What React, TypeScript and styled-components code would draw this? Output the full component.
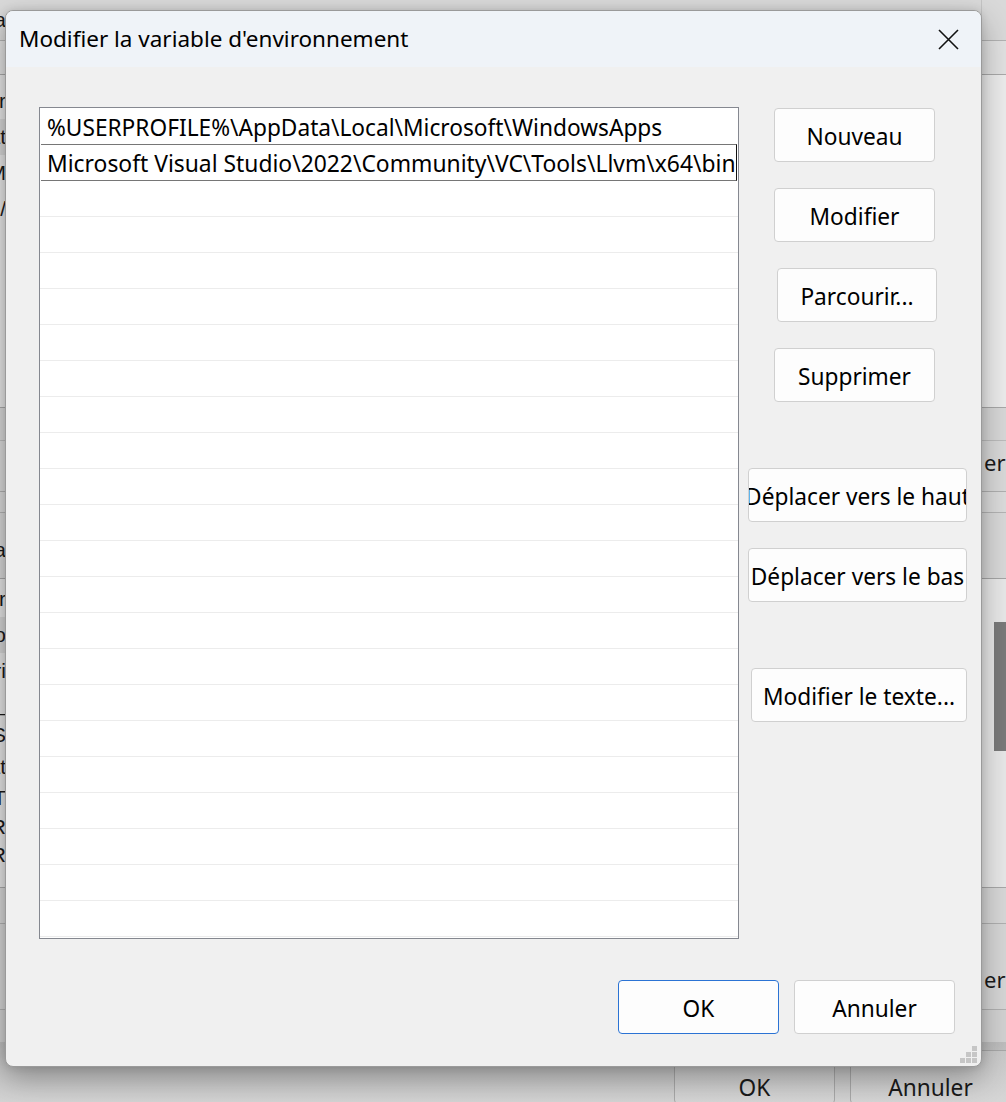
import React from "react";
import styled, { createGlobalStyle } from "styled-components";

const GlobalStyle = createGlobalStyle`
  html, body { margin: 0; padding: 0; }
  body {
    width: 1006px;
    height: 1102px;
    overflow: hidden;
    background: #d6d6d6;
    font-family: "Noto Sans", "Open Sans", sans-serif;
    color: #000;
  }
`;

const Desktop = styled.div`
  position: relative;
  width: 1006px;
  height: 1102px;
  overflow: hidden;
`;

/* ---------- background (parent) window, dimmed ---------- */
const BackWindow = styled.div`
  display: flex;
  flex-direction: column;
  width: 1006px;
  height: 1102px;
  background: #dcdcdc;
`;

const BackSection = styled.div<{ $h: number; $bg: string; $line?: string }>`
  display: flex;
  justify-content: space-between;
  height: ${(p) => p.$h}px;
  flex: none;
  background: ${(p) => p.$bg};
  border-bottom: ${(p) => (p.$line ? `1px solid ${p.$line}` : "none")};
  box-sizing: border-box;
  overflow: hidden;
`;

const LeftPeek = styled.div`
  width: 6px;
  display: flex;
  flex-direction: column;
  overflow: hidden;
`;

const PeekRow = styled.div<{ $h: number; $bg?: string }>`
  height: ${(p) => p.$h}px;
  flex: none;
  display: flex;
  align-items: center;
  justify-content: flex-end;
  background: ${(p) => p.$bg || "transparent"};
  font-family: "Liberation Sans", Arial, sans-serif;
  font-size: 21px;
  color: #1a1a1a;
  white-space: nowrap;
`;

const RightPeek = styled.div<{ $bg?: string }>`
  width: 25px;
  display: flex;
  flex-direction: column;
  background: ${(p) => p.$bg || "transparent"};
  border-left: 1px solid #c4c4c4;
  box-sizing: border-box;
  overflow: hidden;
`;

const RightText = styled.div<{ $mt: number }>`
  margin-top: ${(p) => p.$mt}px;
  padding-left: 2px;
  font-size: 22px;
  color: #1a1a1a;
  white-space: nowrap;
`;

const ScrollThumb = styled.div<{ $mt: number; $h: number }>`
  margin-top: ${(p) => p.$mt}px;
  margin-left: 12px;
  width: 13px;
  height: ${(p) => p.$h}px;
  background: #7a7a7a;
`;

const BackFooter = styled.div`
  flex: 1;
  display: flex;
  gap: 15px;
  padding: 8px 0 0 674px;
  background: linear-gradient(#bdbdbd, #d4d4d4);
  overflow: hidden;
`;

const BackButton = styled.div<{ $w: number }>`
  width: ${(p) => p.$w}px;
  height: 54px;
  flex: none;
  box-sizing: border-box;
  border: 1px solid #a8a8a8;
  border-radius: 4px;
  background: linear-gradient(#c9c9c9, #d6d6d6);
  display: flex;
  justify-content: center;
  padding-top: 21px;
  font-size: 22.7px;
  color: #1a1a1a;
`;

/* ---------- dialog ---------- */
const Dialog = styled.div`
  position: absolute;
  left: 5px;
  top: 10px;
  width: 977px;
  height: 1057px;
  box-sizing: border-box;
  border: 1px solid #9a9a9a;
  border-radius: 8px;
  background: #f0f0f0;
  overflow: hidden;
  display: flex;
  flex-direction: column;
  box-shadow: 0 12px 30px rgba(0, 0, 0, 0.3), 0 0 8px rgba(0, 0, 0, 0.12);
`;

const TitleBar = styled.div`
  height: 56px;
  flex: none;
  display: flex;
  align-items: center;
  justify-content: space-between;
  background: #eff3f8;
  padding: 0 22px 0 13px;
`;

const Title = styled.div`
  font-size: 22.5px;
  padding-bottom: 1px;
`;

const CloseButton = styled.div`
  width: 22px;
  height: 22px;
  display: flex;
  align-items: center;
  justify-content: center;
`;

const Content = styled.div`
  display: flex;
  padding: 40px 0 0 33px;
  gap: 9px;
`;

const ListBox = styled.div`
  width: 700px;
  height: 832px;
  box-sizing: border-box;
  border: 1px solid #858890;
  background: #fff;
  display: flex;
  flex-direction: column;
  overflow: hidden;
`;

const Row = styled.div<{ $sep?: boolean }>`
  height: 36px;
  flex: none;
  box-sizing: border-box;
  border-bottom: ${(p) => (p.$sep ? "1px solid #ececec" : "none")};
  display: flex;
  align-items: center;
  padding-left: 7px;
  padding-top: 2px;
  font-size: 22.7px;
  white-space: nowrap;
  overflow: hidden;
`;

const EditRow = styled.div`
  height: 37px;
  flex: none;
  margin: 0 1px;
  box-sizing: border-box;
  border-top: 1px solid #767676;
  border-bottom: 1px solid #767676;
  border-right: 1px solid #111;
  display: flex;
  align-items: center;
  padding-left: 6px;
  padding-top: 1px;
  font-size: 22.85px;
  white-space: nowrap;
  overflow: hidden;
`;

const ButtonColumn = styled.div`
  width: 219px;
  display: flex;
  flex-direction: column;
  align-items: flex-start;
  padding-top: 1px;
`;

const Button = styled.div<{ $w: number; $ml?: number; $mt?: number; $primary?: boolean }>`
  width: ${(p) => p.$w}px;
  height: 54px;
  flex: none;
  margin-left: ${(p) => p.$ml || 0}px;
  margin-top: ${(p) => p.$mt || 0}px;
  box-sizing: border-box;
  border: 1px solid ${(p) => (p.$primary ? "#2b73d4" : "#d0d0d0")};
  border-radius: 4px;
  background: #fdfdfd;
  display: flex;
  align-items: center;
  justify-content: center;
  font-size: 22.7px;
  white-space: nowrap;
  overflow: hidden;
  padding-top: 2px;
`;

const Footer = styled.div`
  display: flex;
  justify-content: flex-end;
  gap: 15px;
  padding: 41px 26px 0 0;
`;

const Grip = styled.svg`
  position: absolute;
  right: 3px;
  bottom: 2px;
`;

const entries = ["%USERPROFILE%\\AppData\\Local\\Microsoft\\WindowsApps"];
const editing = "Microsoft Visual Studio\\2022\\Community\\VC\\Tools\\Llvm\\x64\\bin";

const sideButtons: { label: string; w: number; ml: number; mt: number }[] = [
  { label: "Nouveau", w: 161, ml: 26, mt: 0 },
  { label: "Modifier", w: 161, ml: 26, mt: 26 },
  { label: "Parcourir...", w: 160, ml: 29, mt: 26 },
  { label: "Supprimer", w: 161, ml: 26, mt: 26 },
  { label: "Déplacer vers le haut", w: 219, ml: 0, mt: 66 },
  { label: "Déplacer vers le bas", w: 219, ml: 0, mt: 26 },
  { label: "Modifier le texte...", w: 216, ml: 3, mt: 66 },
];

export default function App() {
  const emptyRows = Array.from({ length: 21 });
  return (
    <>
      <GlobalStyle />
      <Desktop>
        <BackWindow>
          <BackSection $h={41} $bg="#d9d9d9" $line="#b2b2b2">
            <LeftPeek>
              <PeekRow $h={40}>Va</PeekRow>
            </LeftPeek>
            <RightPeek $bg="#d9d9d9" />
          </BackSection>
          <BackSection $h={34} $bg="#e1e1e1" $line="#a9a9a9">
            <LeftPeek />
            <RightPeek $bg="#e1e1e1" />
          </BackSection>
          <BackSection $h={333} $bg="#e6e6e6" $line="#a8a8a8">
            <LeftPeek>
              <PeekRow $h={8} />
              <PeekRow $h={36}>Ter</PeekRow>
              <PeekRow $h={36} $bg="#d6d6d6">Pat</PeekRow>
              <PeekRow $h={36}>TEM</PeekRow>
              <PeekRow $h={36}>TM/</PeekRow>
            </LeftPeek>
            <RightPeek $bg="#ececec" />
          </BackSection>
          <BackSection $h={33} $bg="#d8d8d8" $line="#bcbcbc">
            <LeftPeek />
            <RightPeek $bg="#d8d8d8" />
          </BackSection>
          <BackSection $h={51} $bg="#dadada" $line="#b0b0b0">
            <LeftPeek />
            <RightPeek $bg="#d9d9d9">
              <RightText $mt={6}>er</RightText>
            </RightPeek>
          </BackSection>
          <BackSection $h={21} $bg="#dadada" $line="#b4b4b4">
            <LeftPeek />
            <RightPeek $bg="#dcdcdc" />
          </BackSection>
          <BackSection $h={66} $bg="#d7d7d7" $line="#a6a6a6">
            <LeftPeek>
              <PeekRow $h={20} />
              <PeekRow $h={34}>Va</PeekRow>
            </LeftPeek>
            <RightPeek $bg="#d9d9d9" />
          </BackSection>
          <BackSection $h={309} $bg="#e4e4e4" $line="#a8a8a8">
            <LeftPeek>
              <PeekRow $h={2} />
              <PeekRow $h={36}>Cor</PeekRow>
              <PeekRow $h={36} $bg="#d4d4d4">Dro</PeekRow>
              <PeekRow $h={36}>Dri</PeekRow>
              <PeekRow $h={30}>N_</PeekRow>
              <PeekRow $h={32}>OS</PeekRow>
              <PeekRow $h={32}>Pat</PeekRow>
              <PeekRow $h={30}>PAT</PeekRow>
              <PeekRow $h={28}>PR</PeekRow>
              <PeekRow $h={28}>PR</PeekRow>
            </LeftPeek>
            <RightPeek $bg="#e8e8e8">
              <ScrollThumb $mt={43} $h={129} />
            </RightPeek>
          </BackSection>
          <BackSection $h={36} $bg="#d6d6d6" $line="#b0b0b0">
            <LeftPeek />
            <RightPeek $bg="#d8d8d8" />
          </BackSection>
          <BackSection $h={86} $bg="#d4d4d4" $line="#b0b0b0">
            <LeftPeek />
            <RightPeek $bg="#d6d6d6">
              <RightText $mt={40}>er</RightText>
            </RightPeek>
          </BackSection>
          <BackSection $h={32} $bg="#cfcfcf">
            <LeftPeek />
            <RightPeek $bg="#d2d2d2" />
          </BackSection>
          <BackFooter>
            <BackButton $w={161}>OK</BackButton>
            <BackButton $w={161}>Annuler</BackButton>
          </BackFooter>
        </BackWindow>

        <Dialog>
          <TitleBar>
            <Title>Modifier la variable d'environnement</Title>
            <CloseButton>
              <svg width="21" height="21" viewBox="0 0 21 21">
                <path d="M1 1 L20 20 M20 1 L1 20" stroke="#111" strokeWidth="1.6" fill="none" />
              </svg>
            </CloseButton>
          </TitleBar>

          <Content>
            <ListBox>
              {entries.map((e) => (
                <Row key={e}>{e}</Row>
              ))}
              <EditRow>{editing}</EditRow>
              {emptyRows.map((_, i) => (
                <Row key={i} $sep />
              ))}
            </ListBox>
            <ButtonColumn>
              {sideButtons.map((b) => (
                <Button key={b.label} $w={b.w} $ml={b.ml} $mt={b.mt}>
                  {b.label}
                </Button>
              ))}
            </ButtonColumn>
          </Content>

          <Footer>
            <Button $w={161} $primary>
              OK
            </Button>
            <Button $w={161}>Annuler</Button>
          </Footer>

          <Grip width="18" height="18" viewBox="0 0 18 18">
            {[
              [12, 0],
              [6, 6],
              [12, 6],
              [0, 12],
              [6, 12],
              [12, 12],
            ].map(([x, y]) => (
              <rect key={`${x}-${y}`} x={x} y={y} width="5" height="5" fill="#c6c6c6" />
            ))}
          </Grip>
        </Dialog>
      </Desktop>
    </>
  );
}
